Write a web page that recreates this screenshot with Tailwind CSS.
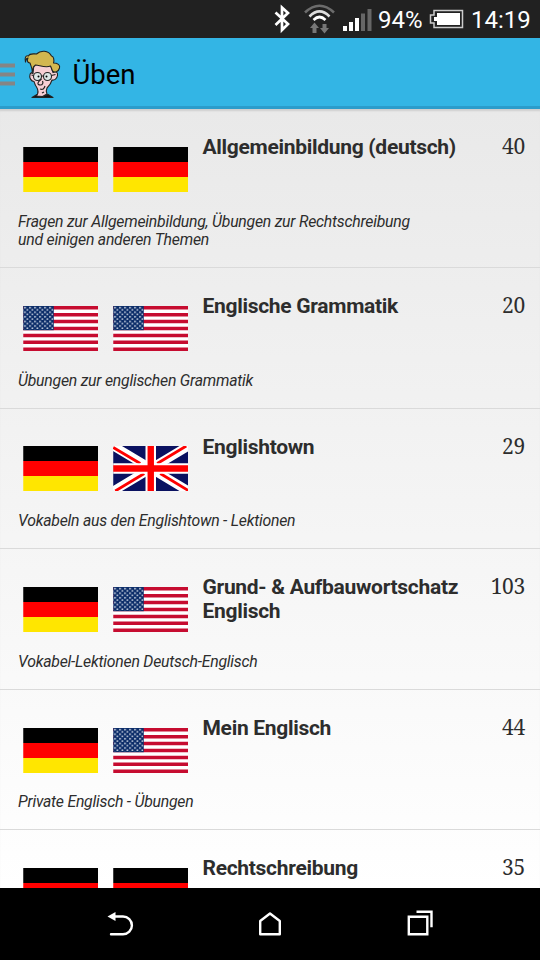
<!DOCTYPE html>
<html lang="de">
  <head>
    <meta charset="UTF-8" />
    <meta name="viewport" content="width=device-width, initial-scale=1.0" />
    <title>Üben</title>
    <script src="https://cdn.jsdelivr.net/npm/@tailwindcss/browser@4"></script>
  </head>
  <body class="bg-black font-['Roboto',sans-serif]">
    <!-- flags, shared by the rows -->
    <svg width="0" height="0" class="absolute">
      <defs>
        <pattern id="stars" width="5" height="4.6" patternUnits="userSpaceOnUse">
          <circle cx="1.8" cy="1.6" r="0.85" fill="#e4eaf2" />
          <circle cx="4.2" cy="3.8" r="0.85" fill="#e4eaf2" />
        </pattern>
        <symbol id="de" viewBox="0 0 75 45">
          <rect width="75" height="15" />
          <rect y="15" width="75" height="15" fill="#f00" />
          <rect y="30" width="75" height="15" fill="#ffe600" />
        </symbol>
        <symbol id="us" viewBox="0 0 75 45">
          <rect width="75" height="45" fill="#fff" />
          <path
            d="M0 1.73h75M0 8.65h75M0 15.57h75M0 22.5h75M0 29.42h75M0 36.34h75M0 43.27h75"
            stroke="#c60c30"
            stroke-width="3.46"
          />
          <rect width="30.5" height="24.2" fill="#0c2d69" />
          <rect width="30" height="24" fill="url(#stars)" />
        </symbol>
        <symbol id="gb" viewBox="0 0 75 45">
          <rect width="75" height="45" fill="#0a1160" />
          <path d="M0 0l75 45M75 0L0 45" stroke="#fff" stroke-width="9" />
          <path
            d="M0 1.5L27 17.5M73 0L44 17.500M2 45L31 27.500M75 44.500L47 27.500"
            stroke="#f00"
            stroke-width="2.8"
          />
          <path d="M37.5 0v45M0 22.5h75" stroke="#fff" stroke-width="10.5" />
          <path d="M37.5 0v45M0 22.5h75" stroke="#f00" stroke-width="6.4" />
        </symbol>
      </defs>
    </svg>

    <div class="flex h-[960px] w-[540px] flex-col overflow-hidden">
      <!-- status bar -->
      <div class="flex h-[38px] shrink-0 bg-[#212121] text-white">
        <svg class="h-[38px] w-[374px] shrink-0" viewBox="0 0 374 38">
          <path
            d="M275.500 12.500l12.500 11.500-6 6V7.500l6 5.500-12.500 12"
            fill="none"
            stroke="#fff"
            stroke-width="2.700"
          />
          <g fill="none" stroke-width="2.600">
            <path d="M305 12.500Q319.500 -1 334 12.500" stroke="#6c6c6c" />
            <path d="M309.500 16.500Q319.500 6.500 329.500 16.500" stroke="#ddd" />
            <path d="M313.500 20Q319.500 14 325.500 20" stroke="#fff" />
          </g>
          <path
            d="M314.500 22.500l4.500 5.500h-2.500v5h-4v-5h-2.500zM324.500 33.500l4.500-5.500h-2.500v-4h-4v4h-2.500z"
            fill="#777"
          />
          <path d="M343 26h4v5h-4zM349 22h4v9h-4zM355 18h4v13h-4z" fill="#fff" />
          <path d="M361 13.500h4v17.500h-4zM367.500 9h4v22h-4z" fill="#666" />
        </svg>
        <span class="w-[55px] shrink-0 pt-[1px] pl-[4px] text-[24px] leading-[38px]">94%</span>
        <svg class="h-[38px] w-[42px] shrink-0" viewBox="0 0 42 38">
          <path
            d="M5 10.500h28.500v17H5v-4.500H1.500v-8H5z"
            fill="none"
            stroke="#ccc"
            stroke-width="1.5"
          />
          <path d="M8 13h23v12H8v-4H5v-4h3z" fill="#fff" />
        </svg>
        <span class="pt-[1px] text-[24px] leading-[38px]">14:19</span>
      </div>

      <!-- action bar -->
      <div
        class="flex h-[71px] shrink-0 items-center border-b-[3px] border-[#2b9ccb] bg-[#33b5e5]"
      >
        <svg class="h-[68px] w-[64px] shrink-0" viewBox="0 38 64 68">
          <path d="M0 65.500h15M0 74.500h15M0 83.500h15" stroke="#858585" stroke-width="4" />
          <g stroke="#222" stroke-width="1.1" stroke-linejoin="round">
            <path d="M32 97.500l5-3 5 2.500 6-2.500 5 3z" fill="#111" />
            <path
              d="M36.500 96c2-3 2-6 0-9-1.500-2-2-4-2.500-5.500-3 0-5-4-4-7 .5-2 2-2 3-1l1-10 16-1 3 10c3-2 5 0 4.500 3-.5 3-3 5-5.500 4.500-1 4-3 6-5 8-1 2-1 4 0 6l-4.500 2.500z"
              fill="#f6ced4"
            />
            <path
              d="M32 73c1-3-1-7-2-10-3 0-3-3-2-5-2 0-2 2-2.500 4-1-4 0-7 3-6 1-3 5-2 8-2 4-4 12-4 15 2 2 0 3 4 2 7 4 0 7 2 6 5-1 4-5 5-7 3l-2-5c-4 2-9 0-15-1l-2 2z"
              fill="#d2b750"
            />
            <circle cx="37.500" cy="76.500" r="4" fill="#dce6e6" />
            <circle cx="47.500" cy="76.500" r="4" fill="#dce6e6" />
          </g>
          <path
            d="M33.500 75.500l-2-.5M51.500 75.500l4-1M41.500 76h2M41.500 79c-4 3-5 6-1 6 2 0 3-2 2-4M40 89c3 1 4 0 5-3M42 93l2-1"
            fill="none"
            stroke="#222"
            stroke-width="1.200"
          />
          <circle cx="38.500" cy="76.500" r="1" />
          <circle cx="46.500" cy="76.500" r="1" />
        </svg>
        <h1 class="pt-[6px] pl-[8.5px] text-[27.5px] text-black">Üben</h1>
      </div>

      <!-- list -->
      <div
        class="h-[779px] shrink-0 overflow-hidden bg-linear-to-b from-[#e9e9e9] to-white inset-shadow-[0_3px_2px_-1px_#cfcfcf]"
        id="list"
      ></div>

      <!-- navigation bar -->
      <div class="flex h-[72px] shrink-0 bg-black">
        <svg
          class="h-[72px] w-[540px]"
          viewBox="0 888 540 72"
          fill="none"
          stroke="#fff"
          stroke-width="2.400"
        >
          <path d="M115 916.500h8a8.900 8.900 0 0 1 0 17.800h-12" stroke-linecap="round" />
          <path d="M107.500 916.500l8-4.500v9z" fill="#fff" stroke="none" />
          <path d="M260.200 934.200v-13.200l9.800-7.500 9.800 7.500v13.200z" stroke-linejoin="round" />
          <path d="M408.800 916.800h18.500v17.500h-18.500zM416.500 911.700h15v15.500" />
        </svg>
      </div>
    </div>

    <script>
      const lessons = [
        {
          flags: ["de", "de"],
          title: "Allgemeinbildung (deutsch)",
          count: 40,
          text: "Fragen zur Allgemeinbildung, Übungen zur Rechtschreibung<br />und einigen anderen Themen",
        },
        { flags: ["us", "us"], title: "Englische Grammatik", count: 20, text: "Übungen zur englischen Grammatik" },
        { flags: ["de", "gb"], title: "Englishtown", count: 29, text: "Vokabeln aus den Englishtown - Lektionen" },
        {
          flags: ["de", "us"],
          title: "Grund- &amp; Aufbauwortschatz<br />Englisch",
          count: 103,
          text: "Vokabel-Lektionen Deutsch-Englisch",
        },
        { flags: ["de", "us"], title: "Mein Englisch", count: 44, text: "Private Englisch - Übungen" },
        { flags: ["de", "de"], title: "Rechtschreibung", count: 35, text: "" },
      ];

      const flag = (name) =>
        `<svg class="h-[45px] w-[75.5px]" preserveAspectRatio="none"><use href="#${name}" /></svg>`;

      document.querySelector("#list").innerHTML = lessons
        .map(
          (lesson) => `
          <div class="border-b border-[#dadada] pb-[17.6px]">
            <div class="flex h-[103.5px] pt-[26px] pl-[22.5px] pr-[15px] text-[#2d2d2d]">
              <div class="flex gap-[14.5px] pt-[11.8px]">${lesson.flags.map(flag).join("")}</div>
              <h2 class="ml-[14.5px] w-[270px] shrink-0 whitespace-nowrap text-[21px] leading-[24px] font-bold tracking-[-0.3px]">${lesson.title}</h2>
              <span class="flex-1 text-right font-['Noto_Serif','Liberation_Serif',serif] text-[21px] leading-[23px] tracking-[-0.3px]">${lesson.count}</span>
            </div>
            <p class="pl-[18px] text-[15.8px] leading-[18.5px] tracking-[-0.23px] text-[#2d2d2d] italic">${lesson.text}</p>
          </div>`
        )
        .join("");
    </script>
  </body>
</html>
